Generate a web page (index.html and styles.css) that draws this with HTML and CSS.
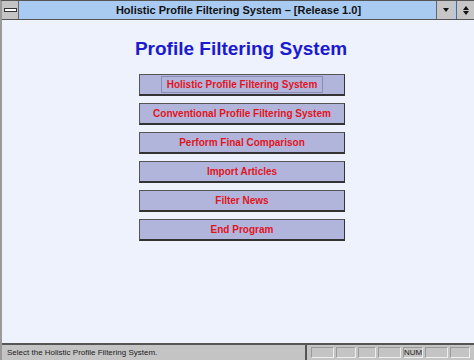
FILE: index.html
```html
<!DOCTYPE html>
<html>
<head>
  <title>Holistic Profile Filtering System</title>
  <meta charset="UTF-8" />
  <link rel="stylesheet" href="styles.css">
</head>
<body>
  <div class="window">
    <div class="title-bar">
      <div class="sys-menu"><span class="sys-dash"></span></div>
      <div class="title-text">Holistic Profile Filtering System – [Release 1.0]</div>
      <div class="title-btn"><span class="arrow-down"></span></div>
      <div class="title-btn restore"><span class="arrow-up"></span><span class="arrow-down"></span></div>
    </div>

    <div class="client">
      <h1>Profile Filtering System</h1>
      <div class="menu">
        <button class="menu-btn focused"><span>Holistic Profile Filtering System</span></button>
        <button class="menu-btn"><span>Conventional Profile Filtering System</span></button>
        <button class="menu-btn"><span>Perform Final Comparison</span></button>
        <button class="menu-btn"><span>Import Articles</span></button>
        <button class="menu-btn"><span>Filter News</span></button>
        <button class="menu-btn"><span>End Program</span></button>
      </div>
    </div>

    <div class="status-bar">
      <div class="status-text">Select the Holistic Profile Filtering System.</div>
      <div class="status-panels">
        <span class="panel w24"></span>
        <span class="panel w20"></span>
        <span class="panel w18"></span>
        <span class="panel w24"></span>
        <span class="panel w20">NUM</span>
        <span class="panel w24"></span>
        <span class="panel w20"></span>
      </div>
    </div>
  </div>
</body>
</html>
```

FILE: styles.css
```css
body {
  margin: 0;
  padding: 0;
  font-family: "Liberation Sans", Arial, sans-serif;
  background-color: #eef2fc;
}

.window {
  width: 474px;
  height: 360px;
  display: flex;
  flex-direction: column;
  box-sizing: border-box;
  border-left: 2px solid #9a9a9a;
  border-top: 1px solid #555;
  overflow: hidden;
}

/* Title bar */
.title-bar {
  display: flex;
  align-items: stretch;
  height: 18px;
  background-color: #a9cbf2;
  border-bottom: 1px solid #555;
}

.sys-menu {
  width: 16px;
  background-color: #c4c4c4;
  border-right: 1px solid #666;
  display: flex;
  align-items: center;
  justify-content: center;
}

.sys-dash {
  width: 11px;
  height: 2px;
  border: 1px solid #333;
  background-color: #fff;
}

.title-text {
  flex: 1;
  text-align: center;
  font-size: 11px;
  font-weight: bold;
  color: #111;
  line-height: 18px;
  padding-left: 22px;
}

.title-btn {
  width: 17px;
  background-color: #c6c6c6;
  border-left: 1px solid #666;
  display: flex;
  flex-direction: column;
  align-items: center;
  justify-content: center;
  gap: 1px;
}

.title-btn.restore {
  margin-left: 2px;
}

.arrow-down {
  width: 0;
  height: 0;
  border-left: 3px solid transparent;
  border-right: 3px solid transparent;
  border-top: 4px solid #111;
}

.arrow-up {
  width: 0;
  height: 0;
  border-left: 3px solid transparent;
  border-right: 3px solid transparent;
  border-bottom: 4px solid #111;
}

/* Client area */
.client {
  flex: 1;
  display: flex;
  flex-direction: column;
  align-items: center;
  background-color: #eef2fc;
}

.client h1 {
  margin: 18px 0 0 0;
  font-size: 19px;
  font-weight: bold;
  color: #1a1ad0;
  line-height: 22px;
  padding-left: 6px;
}

.menu {
  display: flex;
  flex-direction: column;
  gap: 7px;
  margin-top: 14px;
  padding-left: 8px;
}

.menu-btn {
  width: 206px;
  height: 22px;
  box-sizing: border-box;
  background-color: #b1b5db;
  border: 1px solid #555;
  border-right-color: #333;
  border-bottom: 2px solid #333;
  font-family: "Liberation Sans", Arial, sans-serif;
  font-size: 10px;
  font-weight: bold;
  color: #e0141e;
  padding: 0;
  display: flex;
  align-items: center;
  justify-content: center;
}

.menu-btn span {
  padding: 1px 3px;
  border: 1px solid transparent;
}

.menu-btn.focused span {
  border: 1px solid #8a8eb4;
  padding: 2px 5px;
}

/* Status bar */
.status-bar {
  height: 15px;
  display: flex;
  align-items: center;
  background-color: #c4c4c4;
  border-top: 2px solid #555;
}

.status-text {
  width: 305px;
  font-size: 8px;
  color: #222;
  padding-left: 5px;
  box-sizing: border-box;
  border-right: 2px solid #555;
  line-height: 15px;
}

.status-panels {
  display: flex;
  gap: 2px;
  padding-left: 4px;
}

.panel {
  height: 11px;
  box-sizing: border-box;
  border: 1px solid #9a9a9a;
  border-right-color: #eee;
  border-bottom-color: #eee;
  font-size: 8px;
  line-height: 9px;
  color: #222;
  text-align: center;
}

.w18 { width: 18px; }
.w20 { width: 20px; }
.w24 { width: 23px; }
```
